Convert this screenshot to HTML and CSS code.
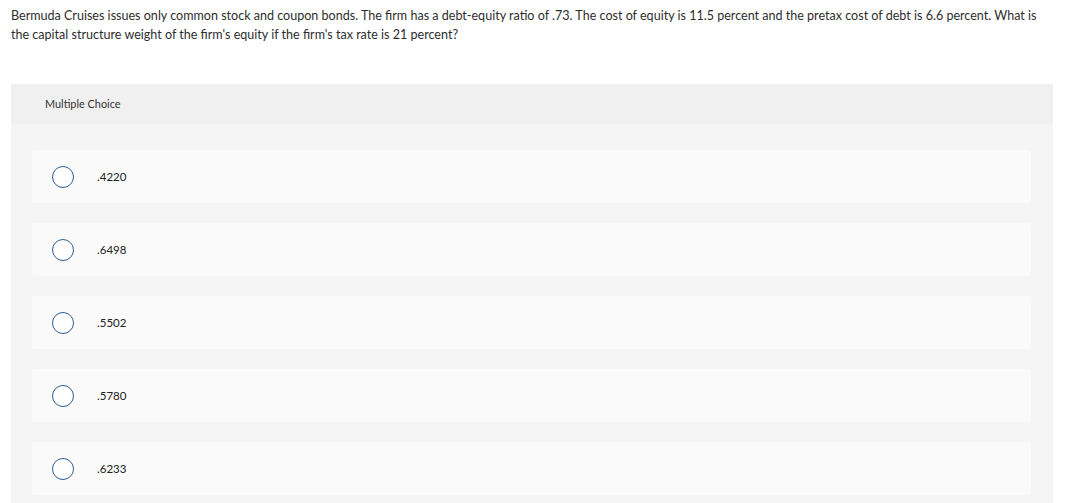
FILE: index.html
```html
<!DOCTYPE html>
<html>
<head>
<meta charset="utf-8">
<link rel="stylesheet" href="styles.css">
</head>
<body>
<div class="page">
  <p class="question">Bermuda Cruises issues only common stock and coupon bonds. The firm has a debt-equity ratio of .73. The cost of equity is 11.5 percent and the pretax cost of debt is 6.6 percent. What is the capital structure weight of the firm's equity if the firm's tax rate is 21 percent?</p>
  <div class="panel">
    <div class="panel-head">Multiple Choice</div>
    <div class="panel-body">
      <div class="option"><span class="radio"></span><span class="label">.4220</span></div>
      <div class="option"><span class="radio"></span><span class="label">.6498</span></div>
      <div class="option"><span class="radio"></span><span class="label">.5502</span></div>
      <div class="option"><span class="radio"></span><span class="label">.5780</span></div>
      <div class="option"><span class="radio"></span><span class="label">.6233</span></div>
    </div>
  </div>
</div>
</body>
</html>
```

FILE: styles.css
```css
html, body {
  margin: 0;
  padding: 0;
  background: #ffffff;
}
body {
  font-family: "Lato", "Liberation Sans", sans-serif;
  color: #222222;
}
.page {
  padding: 6px 27px 0 11px;
}
.question {
  margin: 0;
  padding-right: 8px;
  font-size: 12.55px;
  line-height: 19px;
  color: #2d2d2d;
}
.panel {
  margin-top: 40px;
  background: #f5f5f5;
  border-radius: 3px 3px 0 0;
}
.panel-head {
  height: 38px;
  padding-bottom: 2px;
  display: flex;
  align-items: center;
  padding-left: 34px;
  background: #f0f0f0;
  font-size: 10.9px;
  color: #333333;
  border-radius: 3px 3px 0 0;
}
.panel-body {
  display: flex;
  flex-direction: column;
  gap: 20px;
  padding: 26px 22px 20px 21px;
}
.option {
  height: 53px;
  display: flex;
  align-items: center;
  background: #fafafa;
  border-radius: 3px;
  padding-left: 20px;
}
.radio {
  width: 20px;
  height: 20px;
  border: 1.5px solid #2f5f8f;
  border-radius: 50%;
  background: #ffffff;
  flex: none;
}
.label {
  margin-left: 23px;
  font-size: 11.5px;
  color: #222222;
}
```
